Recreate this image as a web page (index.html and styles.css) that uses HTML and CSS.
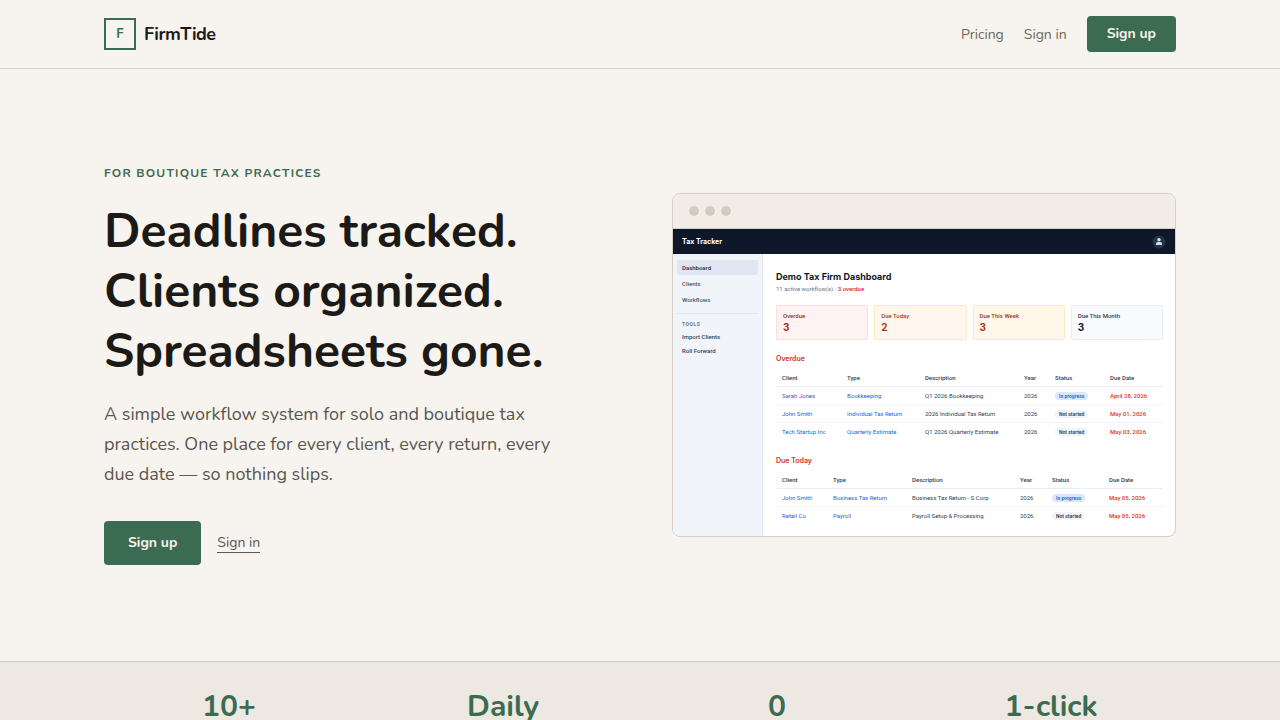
FILE: index.html
```html
<!DOCTYPE html>
<html lang="en">
<head>
<meta charset="utf-8">
<meta name="viewport" content="width=device-width, initial-scale=1">
<title>FirmTide</title>
<link rel="stylesheet" href="styles.css">
</head>
<body>
<header class="site-header">
  <div class="container header-row">
    <a class="brand" href="#"><span class="brand-mark">F</span><span class="brand-name">FirmTide</span></a>
    <nav class="site-nav">
      <a class="nav-link" href="#">Pricing</a>
      <a class="nav-link" href="#">Sign in</a>
      <a class="btn btn-small" href="#">Sign up</a>
    </nav>
  </div>
</header>
<main>
  <section class="container hero">
    <div class="hero-copy">
      <p class="eyebrow">For boutique tax practices</p>
      <h1 class="headline">Deadlines tracked.<br>Clients organized.<br>Spreadsheets gone.</h1>
      <p class="lede">A simple workflow system for solo and boutique tax practices. One place for every client, every return, every due date — so nothing slips.</p>
      <div class="actions">
        <a class="btn btn-large" href="#">Sign up</a>
        <a class="text-link" href="#">Sign in</a>
      </div>
    </div>
    <div class="browser">
      <div class="browser-bar"><span class="dot"></span><span class="dot"></span><span class="dot"></span></div>
      <div class="app">
        <div class="app-top">
          <span class="app-name">Tax Tracker</span>
          <svg class="avatar" viewBox="0 0 14 14" aria-hidden="true"><circle cx="7" cy="7" r="6.5" fill="#263449"/><circle cx="7" cy="4.8" r="1.7" fill="#d5dae2"/><path d="M4 10V8.700Q4 7 5.700 7H8.300Q10 7 10 8.700V10Z" fill="#d5dae2"/></svg>
        </div>
        <div class="app-body">
          <aside class="side">
            <a class="side-link active" href="#">Dashboard</a>
            <a class="side-link" href="#">Clients</a>
            <a class="side-link" href="#">Workflows</a>
            <div class="side-tools">
              <div class="side-title">TOOLS</div>
              <a class="side-link tool" href="#">Import Clients</a>
              <a class="side-link tool" href="#">Roll Forward</a>
            </div>
          </aside>
          <div class="dash">
            <h2 class="dash-title">Demo Tax Firm Dashboard</h2>
            <p class="dash-sub">11 active workflow(s) · <span class="late">3 overdue</span></p>
            <div class="cards">
              <div class="card red"><div class="card-label">Overdue</div><div class="card-num">3</div></div>
              <div class="card orange"><div class="card-label">Due Today</div><div class="card-num">2</div></div>
              <div class="card amber"><div class="card-label">Due This Week</div><div class="card-num">3</div></div>
              <div class="card slate"><div class="card-label">Due This Month</div><div class="card-num">3</div></div>
            </div>
            <h3 class="group-title">Overdue</h3>
            <table class="tasks overdue">
              <thead><tr><th class="c1">Client</th><th class="c2">Type</th><th class="c3">Description</th><th class="c4">Year</th><th class="c5">Status</th><th class="c6">Due Date</th></tr></thead>
              <tbody>
                <tr><td><a href="#">Sarah Jones</a></td><td><a href="#">Bookkeeping</a></td><td>Q1 2026 Bookkeeping</td><td>2026</td><td><span class="pill blue">In progress</span></td><td class="due">April 28, 2026</td></tr>
                <tr><td><a href="#">John Smith</a></td><td><a href="#">Individual Tax Return</a></td><td>2026 Individual Tax Return</td><td>2026</td><td><span class="pill">Not started</span></td><td class="due">May 01, 2026</td></tr>
                <tr><td><a href="#">Tech Startup Inc</a></td><td><a href="#">Quarterly Estimate</a></td><td>Q1 2026 Quarterly Estimate</td><td>2026</td><td><span class="pill">Not started</span></td><td class="due">May 03, 2026</td></tr>
              </tbody>
            </table>
            <h3 class="group-title second">Due Today</h3>
            <table class="tasks today">
              <thead><tr><th class="c1">Client</th><th class="c2">Type</th><th class="c3">Description</th><th class="c4">Year</th><th class="c5">Status</th><th class="c6">Due Date</th></tr></thead>
              <tbody>
                <tr><td><a href="#">John Smith</a></td><td><a href="#">Business Tax Return</a></td><td>Business Tax Return - S Corp</td><td>2026</td><td><span class="pill blue">In progress</span></td><td class="due">May 05, 2026</td></tr>
                <tr><td><a href="#">Retail Co</a></td><td><a href="#">Payroll</a></td><td>Payroll Setup &amp; Processing</td><td>2026</td><td><span class="pill">Not started</span></td><td class="due">May 05, 2026</td></tr>
              </tbody>
            </table>
          </div>
        </div>
      </div>
    </div>
  </section>
  <section class="stats">
    <div class="container stats-row">
      <div class="stat">10+</div>
      <div class="stat">Daily</div>
      <div class="stat">0</div>
      <div class="stat">1-click</div>
    </div>
  </section>
</main>
</body>
</html>
```
FILE: styles.css
```css
* { box-sizing: border-box; }
body {
  margin: 0;
  background: #f7f3ee;
  color: #1c1a17;
  font-family: Nunito, Lato, sans-serif;
}
h1, h2, h3, p { margin: 0; }
a { color: inherit; text-decoration: none; }
.container { max-width: 1120px; margin: 0 auto; padding: 0 24px; }

.site-header { border-bottom: 1px solid #d6d1cb; }
.header-row { display: flex; align-items: center; justify-content: space-between; padding-top: 16px; padding-bottom: 16px; }
.brand { display: flex; align-items: center; gap: 8px; }
.brand-mark {
  width: 32px; height: 32px; border: 2px solid #3b6b50; color: #3b6b50;
  display: grid; place-items: center; font-size: 13px; line-height: 18px; font-weight: 700;
}
.brand-name { font-size: 18px; font-weight: 700; letter-spacing: -0.5px; }
.site-nav { display: flex; align-items: center; gap: 20px; }
.nav-link { font-size: 14px; color: #6b6761; }
.btn {
  display: inline-block; background: #3b6b50; color: #f7f3ee; border-radius: 4px;
  font-size: 14px; font-weight: 700;
}
.btn-small { padding: 0 20px; line-height: 36px; }
.btn-large { padding: 0 24px; line-height: 44px; }

.hero {
  display: grid; grid-template-columns: repeat(2, minmax(0, 1fr)); gap: 64px; align-items: center;
  padding-top: 96px; padding-bottom: 96px;
}
.eyebrow {
  font-size: 12px; line-height: 16px; font-weight: 700; letter-spacing: 0.1em;
  text-transform: uppercase; color: #3b6b50; margin-bottom: 20px;
}
.headline { font-size: 48px; line-height: 60px; font-weight: 700; margin-bottom: 18px; }
.lede { max-width: 460px; font-size: 18px; line-height: 30px; color: #5a5650; margin-bottom: 32px; }
.actions { display: flex; align-items: center; gap: 16px; }
.text-link { font-size: 14px; line-height: 18px; color: #5a5650; border-bottom: 1px solid #5a5650; }

.browser { border: 1px solid #d3cec6; border-radius: 8px; overflow: hidden; background: #fff; }
.browser-bar { display: flex; gap: 6px; padding: 12px 16px; background: #f1ece5; border-bottom: 1px solid #d3cec6; }
.dot { width: 10px; height: 10px; border-radius: 50%; background: #d0cbc3; }

.app { font-family: Roboto, sans-serif; font-size: 6px; line-height: 8px; color: #334155; }
.app-top {
  display: flex; align-items: center; justify-content: space-between; height: 25px;
  padding: 0 9px; background: #0f172a; color: #fff;
}
.app-name { font-family: Inter, sans-serif; font-size: 7px; font-weight: 700; }
.avatar { width: 14px; height: 14px; }
.app-body { display: grid; grid-template-columns: 90px minmax(0, 1fr); }
.side { background: #f1f5f9; border-right: 1px solid #e2e8f0; padding: 6px 4px; }
.side-link { display: block; padding: 0 5px; line-height: 15px; margin-bottom: 1px; font-weight: 500; border-radius: 2px; color: #475569; }
.side-link.active { background: #e0e7f2; color: #1e293b; }
.side-tools { border-top: 1px solid #e2e8f0; margin-top: 6px; padding-top: 6px; }
.side-title { padding: 0 5px; font-size: 5px; font-weight: 700; letter-spacing: 0.1em; color: #64748b; }
.side-link.tool { line-height: 14px; margin: 0; color: #334155; }
.side-title + .tool { margin-top: 2px; }
.dash { padding: 17px 12px 11px 13px; }
.dash-title { font-family: Inter, sans-serif; font-size: 9px; line-height: 12px; font-weight: 700; color: #0f172a; }
.dash-sub { color: #64748b; margin: 2px 0 12px; }
.late { color: #dc2626; font-weight: 500; }
.cards { display: grid; grid-template-columns: repeat(4, minmax(0, 1fr)); gap: 6px; margin-bottom: 14px; }
.card { border: 1px solid; border-radius: 2px; padding: 6px 6px 5px; }
.card-label { font-weight: 500; }
.card-num { font-family: Inter, sans-serif; font-size: 10px; line-height: 14px; font-weight: 700; }
.red { background: #fef2f2; border-color: #f7dfdc; color: #b02a20; }
.orange { background: #fff7ed; border-color: #fde9c0; color: #b03a1c; }
.amber { background: #fff8ea; border-color: #fdeabf; color: #a8321c; }
.slate { background: #f8fafc; border-color: #e8edf3; color: #334155; }
.slate .card-num { color: #0f172a; }
.group-title { font-family: Inter, sans-serif; font-size: 7px; line-height: 10px; font-weight: 600; color: #d03420; margin-bottom: 5px; }
.group-title.second { margin-top: 15px; }
.tasks { width: 100%; table-layout: fixed; border-collapse: separate; border-spacing: 0; }
.tasks th, .tasks td { height: 18px; padding: 0 0 0 6px; text-align: left; white-space: nowrap; border-bottom: 1px solid #f1f5f9; }
.tasks th { font-weight: 500; color: #334155; }
.tasks tr:last-child td { border-bottom: 0; }
.tasks thead th { border-bottom: 1px solid #e8edf3; }
.tasks a { color: #2563eb; }
.tasks .due { color: #dc3626; font-weight: 500; }
.overdue .c1 { width: 65px; }
.overdue .c2 { width: 78px; }
.overdue .c3 { width: 99px; }
.overdue .c4 { width: 31px; }
.overdue .c5 { width: 55px; }
.overdue .c6 { width: 59px; }
.today .c1 { width: 51px; }
.today .c2 { width: 79px; }
.today .c3 { width: 108px; }
.today .c4 { width: 32px; }
.today .c5 { width: 57px; }
.today .c6 { width: 60px; }
.pill { display: inline-block; padding: 0 4px; border-radius: 4px; background: #f1f5f9; font-size: 5px; font-weight: 600; vertical-align: middle; }
.pill.blue { background: #dbe6fb; color: #2563eb; }

.stats { background: #ede8e1; border-top: 1px solid #cfcac2; padding: 24px 0 32px; }
.stats-row { display: grid; grid-template-columns: repeat(4, minmax(0, 1fr)); gap: 24px; }
.stat { text-align: center; font-size: 30px; line-height: 42px; font-weight: 700; color: #3b6b50; }
```
